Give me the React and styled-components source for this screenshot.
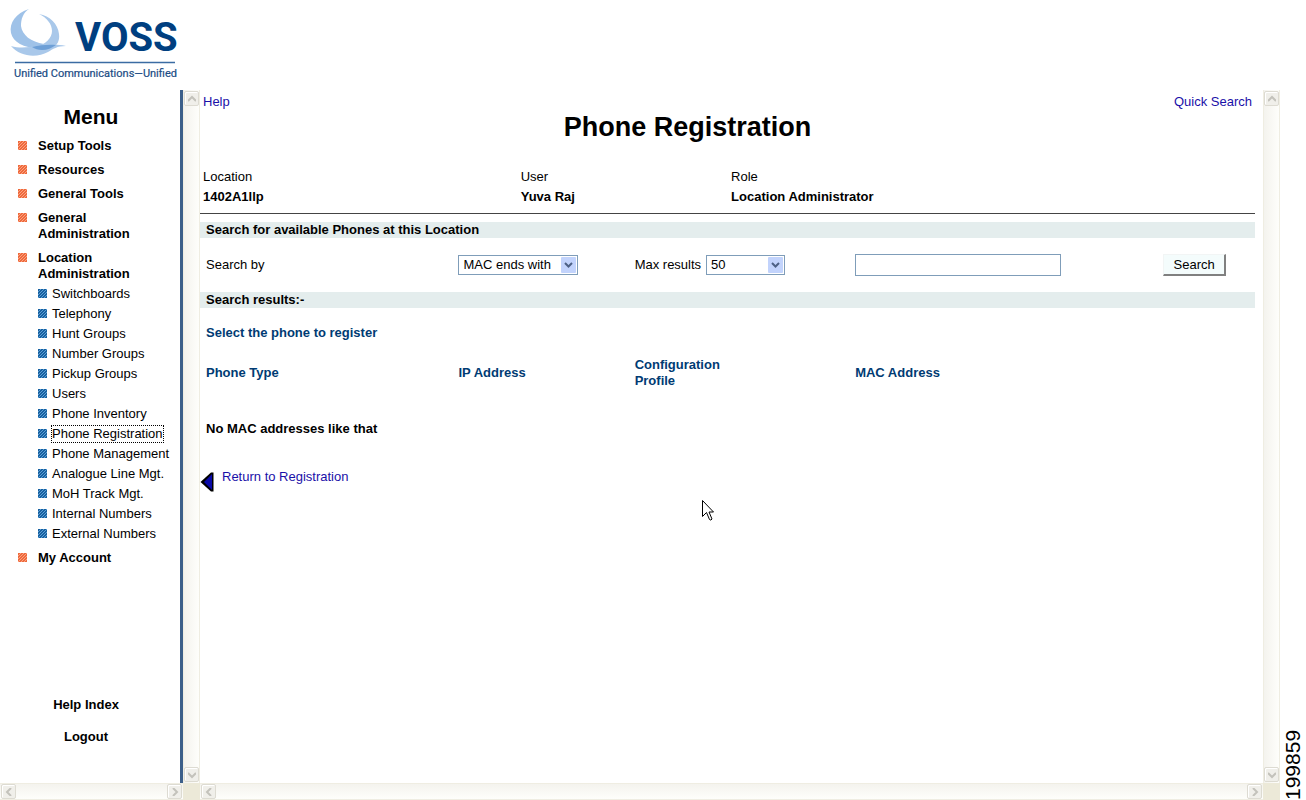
import { useState } from "react";
import styled, { createGlobalStyle } from "styled-components";

const GlobalStyle = createGlobalStyle`
  * {
    box-sizing: border-box;
  }

  body {
    margin: 0;
    background: #fff;
    color: #000;
    font-family: "Liberation Sans", Arial, sans-serif;
    font-size: 13px;
    line-height: 16px;
  }
`;

const Page = styled.div`
  min-height: 100vh;
  display: flex;
  flex-direction: column;
`;

const Header = styled.header`
  height: 90px;
  padding: 8px 8px 0;
`;

const Frames = styled.div`
  flex: 1;
  display: flex;
`;

const Frame = styled.section`
  display: grid;
  grid-template-columns: minmax(0, 1fr) 17px;
  grid-template-rows: 1fr 17px;
  flex: ${(props) => (props.$width ? `0 0 ${props.$width}` : "1")};
  min-width: 0;
`;

const Track = styled.div`
  display: flex;
  flex-direction: ${(props) => (props.$vertical ? "column" : "row")};
  justify-content: space-between;
  align-items: center;
  padding: ${(props) => (props.$vertical ? "1px 0" : "0 1px")};
  border: solid #efede2;
  border-width: ${(props) => (props.$vertical ? "0 1px" : "1px 0")};
  background: linear-gradient(
    ${(props) => (props.$vertical ? "to right" : "to bottom")},
    #f4f3ee,
    #fefefb
  );
`;

const TrackButton = styled.button`
  width: 15px;
  height: 15px;
  padding: 0;
  display: flex;
  align-items: center;
  justify-content: center;
  border: 1px solid #dddbd2;
  border-radius: 2px;
  background: #f0efea;
  box-shadow: inset 1px 1px 0 #fff;
`;

const Corner = styled.div`
  background: #ece9d8;
`;

const Sidebar = styled.nav`
  padding: 16px 0 38px;
  border-right: 3px solid #3c5f8a;
  display: flex;
  flex-direction: column;
`;

const MenuTitle = styled.h2`
  margin: 0 0 11px;
  padding-left: 2px;
  font-size: 21px;
  line-height: 21px;
  text-align: center;
`;

const MenuList = styled.ul`
  list-style: none;
  margin: 0;
  padding: 0 0 0 18px;
  display: flex;
  flex-direction: column;
  gap: 8px;
`;

const MenuLink = styled.a`
  display: flex;
  align-items: flex-start;
  gap: 11px;
  padding-right: 40px;
  color: #000;
  font-weight: bold;
  text-decoration: none;
`;

const SubList = styled.ul`
  list-style: none;
  margin: 0;
  padding: 0 0 0 20px;
`;

const SubItem = styled.li`
  margin-top: 4px;
`;

const SubLink = styled.a`
  display: flex;
  gap: 5px;
  color: #000;
  text-decoration: none;
  white-space: nowrap;

  &[aria-current] span {
    outline: 1px dotted #000;
  }
`;

const BulletIcon = styled.svg`
  flex: none;
  width: 9px;
  height: 9px;
  margin-top: 3px;
`;

const FooterLinks = styled.div`
  margin-top: auto;
  padding-right: 8px;
  display: flex;
  flex-direction: column;
  align-items: center;
  gap: 16px;
`;

const FooterLink = styled.a`
  color: #000;
  font-weight: bold;
  text-decoration: none;
`;

const Main = styled.main`
  position: relative;
  padding: 4px 8px 0 0;
`;

const TopLinks = styled.div`
  display: flex;
  justify-content: space-between;
  padding: 0 3px;
`;

const TextLink = styled.a`
  color: #1a10a8;
  text-decoration: none;
`;

const Title = styled.h1`
  margin: 1px 80px 24px 0;
  font-size: 27px;
  line-height: 32px;
  text-align: center;
`;

const Details = styled.dl`
  margin: 0;
  padding: 0 0 6px 3px;
  display: grid;
  grid-template-columns: 30.2% 20% 1fr;
  border-bottom: 1px solid #444;
`;

const DetailName = styled.dt`
  line-height: 20px;
`;

const DetailValue = styled.dd`
  margin: 0;
  font-weight: bold;
  line-height: 20px;
`;

const SearchArea = styled.div`
  padding-top: 8px;
`;

const Band = styled.h3`
  margin: 0;
  padding: 0 6px;
  background: #e4eded;
  font-size: 13px;
  line-height: 16px;
`;

const SearchForm = styled.form`
  display: grid;
  grid-template-columns: 24.5% 16.7% 20.9% 29.2% 1fr;
  align-items: center;
  padding: 16px 0;
`;

const FirstLabel = styled.label`
  padding-left: 6px;
`;

const Field = styled.div`
  display: flex;
  align-items: center;
  gap: 5px;
`;

const SelectBox = styled.div`
  position: relative;
  width: ${(props) => props.$width};
`;

const Select = styled.select`
  display: block;
  appearance: none;
  width: 100%;
  height: 20px;
  padding: 0 20px 0 4px;
  border: 1px solid #7f9db9;
  border-radius: 0;
  background: #fff;
  color: #000;
  font: inherit;
`;

const SelectArrow = styled.svg`
  position: absolute;
  top: 2px;
  right: 2px;
  width: 15px;
  height: 16px;
  pointer-events: none;
`;

const TextInput = styled.input`
  width: 206px;
  height: 22px;
  padding: 0 4px;
  border: 1px solid #7f9db9;
  background: #fff;
  font: inherit;
`;

const SearchButton = styled.button`
  width: 63px;
  height: 22px;
  padding: 0;
  border: solid;
  border-width: 1px 2px 2px 1px;
  border-color: #f2f5f5 #808080 #808080 #f2f5f5;
  background: #f4fcfc;
  color: #000;
  font: inherit;
`;

const Results = styled.table`
  width: 100%;
  margin-top: 17px;
  border-collapse: collapse;
  table-layout: fixed;
  text-align: left;

  caption {
    padding: 0 6px 16px;
    color: #003b73;
    font-weight: bold;
    text-align: left;
  }

  th {
    padding: 0;
    color: #003b73;
    vertical-align: middle;
  }

  td {
    padding: 32px 0 0 6px;
    font-weight: bold;
  }

  th:first-child {
    padding-left: 6px;
  }
`;

const Column = styled.col`
  width: ${(props) => props.$width};
`;

const Narrow = styled.div`
  width: 100px;
`;

const ReturnLink = styled(TextLink)`
  display: inline-flex;
  align-items: flex-start;
  gap: 8px;
  margin-top: 32px;

  svg {
    margin-top: 3px;
  }
`;

const Pointer = styled.svg`
  position: absolute;
  top: 410px;
  left: 502px;
  pointer-events: none;
`;

const FigureNumber = styled.aside`
  flex: 0 0 26px;
  writing-mode: vertical-rl;
  transform: rotate(180deg);
  font-size: 21px;
  line-height: 26px;
`;

const menu = [
  { label: "Setup Tools" },
  { label: "Resources" },
  { label: "General Tools" },
  { label: "General Administration" },
  {
    label: "Location Administration",
    children: [
      "Switchboards",
      "Telephony",
      "Hunt Groups",
      "Number Groups",
      "Pickup Groups",
      "Users",
      "Phone Inventory",
      "Phone Registration",
      "Phone Management",
      "Analogue Line Mgt.",
      "MoH Track Mgt.",
      "Internal Numbers",
      "External Numbers",
    ],
  },
  { label: "My Account" },
];

const chevrons = {
  up: "M0 6 4 2 8 6",
  down: "M0 2 4 6 8 2",
  left: "M6 0 2 4 6 8",
  right: "M2 0 6 4 2 8",
};

const Logo = () => (
  <svg width="180" height="74" viewBox="8 8 180 74" role="img" aria-label="VOSS">
    <path
      d="M29 9C16 13 9 23 11 33C13 42 24 48 38 48L44 44C31 42 22 35 21 26C21 19 23 13 29 9Z"
      fill="#9fc2e8"
    />
    <path
      d="M39 14C50 16 58 24 59 34C60 41 57 45 52 49L36 47C46 44 52 38 52 31C52 24 47 18 39 14Z"
      fill="#a9c8ea"
    />
    <path
      d="M11 46C21 49 30 47 38 45.5C48 44 58 44 66 46C57 46 53 49 48 52C37 58 20 57 11 46Z"
      fill="#a9c8ea"
    />
    <path
      d="M32 47C40 45 48 44.5 56 45C52 48 47 50 42 50C38 50 35 49 32 47Z"
      fill="#6d9fd6"
    />
    <text
      x="75"
      y="51"
      fill="#003f80"
      fontFamily="Roboto, sans-serif"
      fontSize="40"
      fontWeight="700"
    >
      VOSS
    </text>
    <path d="M15 62.5H175" stroke="#3b6ca3" strokeWidth="1.5" />
    <text
      x="14"
      y="77"
      fill="#1b4c84"
      stroke="#1b4c84"
      strokeWidth="0.2"
      fontFamily="Roboto, sans-serif"
      fontSize="11"
    >
      Unified Communications—Unified
    </text>
  </svg>
);

const Bullet = ({ color, stripe }) => (
  <BulletIcon viewBox="0 0 9 9" aria-hidden="true">
    <rect width="9" height="9" fill={color} />
    <path
      d="M0 3 3 0M0 6 6 0M0 9 9 0M3 9 9 3M6 9 9 6"
      stroke={stripe}
      strokeWidth="0.8"
    />
  </BulletIcon>
);

const ScrollButton = ({ direction }) => (
  <TrackButton type="button" aria-label={`Scroll ${direction}`}>
    <svg width="8" height="8" viewBox="0 0 8 8">
      <path
        d={chevrons[direction]}
        fill="none"
        stroke="#c3c2bb"
        strokeWidth="2"
      />
    </svg>
  </TrackButton>
);

const ScrollFrame = ({ width, children }) => (
  <Frame $width={width}>
    {children}
    <Track $vertical>
      <ScrollButton direction="up" />
      <ScrollButton direction="down" />
    </Track>
    <Track>
      <ScrollButton direction="left" />
      <ScrollButton direction="right" />
    </Track>
    <Corner />
  </Frame>
);

const DropDown = ({ id, width, options }) => (
  <SelectBox $width={width}>
    <Select id={id}>
      {options.map((option) => (
        <option key={option}>{option}</option>
      ))}
    </Select>
    <SelectArrow viewBox="0 0 15 16" aria-hidden="true">
      <rect width="15" height="16" rx="1" fill="#c2d3fc" />
      <path d="M4 6 7.5 9.5 11 6" fill="none" stroke="#4d6185" strokeWidth="2" />
    </SelectArrow>
  </SelectBox>
);

const App = () => {
  const [mac, setMac] = useState("");

  return (
    <Page>
      <GlobalStyle />
      <Header>
        <Logo />
      </Header>
      <Frames>
        <ScrollFrame width="200px">
          <Sidebar>
            <MenuTitle>Menu</MenuTitle>
            <MenuList>
              {menu.map(({ label, children }) => (
                <li key={label}>
                  <MenuLink href="#">
                    <Bullet color="#ee6a3c" stripe="#ffb195" />
                    <span>{label}</span>
                  </MenuLink>
                  {children && (
                    <SubList>
                      {children.map((child) => (
                        <SubItem key={child}>
                          <SubLink
                            href="#"
                            aria-current={
                              child === "Phone Registration"
                                ? "page"
                                : undefined
                            }>
                            <Bullet color="#17609f" stripe="#6fb0e4" />
                            <span>{child}</span>
                          </SubLink>
                        </SubItem>
                      ))}
                    </SubList>
                  )}
                </li>
              ))}
            </MenuList>
            <FooterLinks>
              <FooterLink href="#">Help Index</FooterLink>
              <FooterLink href="#">Logout</FooterLink>
            </FooterLinks>
          </Sidebar>
        </ScrollFrame>
        <ScrollFrame>
          <Main>
            <TopLinks>
              <TextLink href="#">Help</TextLink>
              <TextLink href="#">Quick Search</TextLink>
            </TopLinks>
            <Title>Phone Registration</Title>
            <Details>
              <div>
                <DetailName>Location</DetailName>
                <DetailValue>1402A1llp</DetailValue>
              </div>
              <div>
                <DetailName>User</DetailName>
                <DetailValue>Yuva Raj</DetailValue>
              </div>
              <div>
                <DetailName>Role</DetailName>
                <DetailValue>Location Administrator</DetailValue>
              </div>
            </Details>
            <SearchArea>
              <Band>Search for available Phones at this Location</Band>
              <SearchForm onSubmit={(e) => e.preventDefault()}>
                <FirstLabel htmlFor="search-by">Search by</FirstLabel>
                <DropDown
                  id="search-by"
                  width="120px"
                  options={["MAC ends with", "MAC starts with"]}
                />
                <Field>
                  <label htmlFor="max-results">Max results</label>
                  <DropDown
                    id="max-results"
                    width="79px"
                    options={["50", "100"]}
                  />
                </Field>
                <TextInput
                  type="text"
                  aria-label="MAC address"
                  value={mac}
                  onChange={(e) => setMac(e.target.value)}
                />
                <SearchButton type="submit">Search</SearchButton>
              </SearchForm>
              <Band>Search results:-</Band>
            </SearchArea>
            <Results>
              <caption>Select the phone to register</caption>
              <colgroup>
                <Column $width="24.5%" />
                <Column $width="16.7%" />
                <Column $width="20.9%" />
                <Column />
              </colgroup>
              <thead>
                <tr>
                  <th>Phone Type</th>
                  <th>IP Address</th>
                  <th>
                    <Narrow>Configuration Profile</Narrow>
                  </th>
                  <th>MAC Address</th>
                </tr>
              </thead>
              <tbody>
                <tr>
                  <td colSpan={4}>No MAC addresses like that</td>
                </tr>
              </tbody>
            </Results>
            <ReturnLink href="#">
              <svg width="14" height="20" viewBox="0 0 14 20" aria-hidden="true">
                <path d="M13.5 .5V19.5H11L.5 10 11 .5Z" fill="#000" />
                <path d="M12 2V18L4 10Z" fill="#0a0aa8" />
              </svg>
              Return to Registration
            </ReturnLink>
            <Pointer width="12" height="21" viewBox="0 0 12 21" aria-hidden="true">
              <path
                d="M.5 .5V16.5L4.5 12.5L7.5 19.5Q9 21 10 19L7 12H11.5Z"
                fill="#fff"
                stroke="#000"
              />
            </Pointer>
          </Main>
        </ScrollFrame>
        <FigureNumber>199859</FigureNumber>
      </Frames>
    </Page>
  );
};

export default App;
